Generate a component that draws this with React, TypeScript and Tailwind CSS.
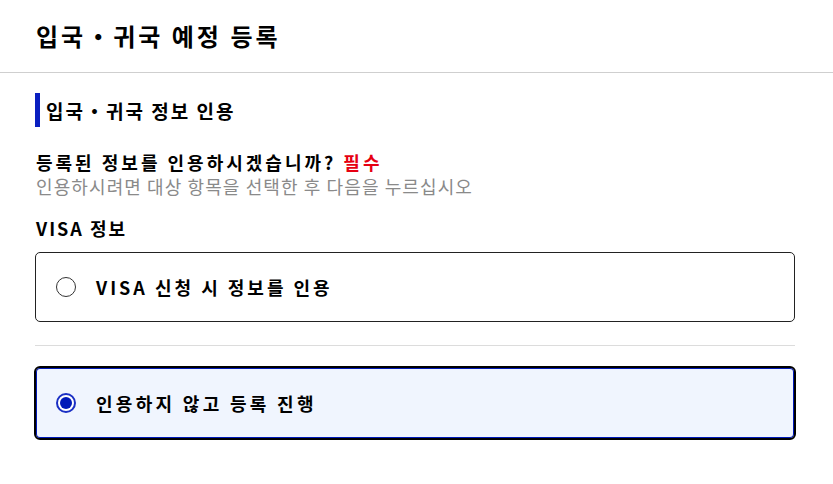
const font = { fontFamily: '"Noto Sans CJK KR", "Noto Sans", sans-serif' }

function Radio({ checked }: { checked: boolean }) {
  return checked ? (
    <span className="flex h-[20px] w-[20px] shrink-0 items-center justify-center rounded-full border-2 border-[#1a2fc4] bg-white">
      <span className="h-[12px] w-[12px] rounded-full bg-[#0019b8]" />
    </span>
  ) : (
    <span className="h-[20px] w-[20px] shrink-0 rounded-full border border-[#333] bg-white" />
  )
}

export default function App() {
  return (
    <div className="min-h-[484px] w-[833px] bg-white text-black" style={font}>
      {/* 헤더 */}
      <div className="flex h-[73px] items-center border-b border-[#cfcfcf] pl-[36px]">
        <h1 className="text-[24px] font-bold leading-none tracking-[3px]">입국・귀국 예정 등록</h1>
      </div>

      <div className="pl-[35px] pr-[38px]">
        {/* 섹션 제목 */}
        <div className="mt-[20px] flex h-[34px] items-center">
          <span className="h-full w-[5px] bg-[#0a1fc0]" />
          <h2 className="ml-[6px] text-[19px] font-bold leading-none tracking-[2px]">입국・귀국 정보 인용</h2>
        </div>

        {/* 질문 */}
        <div className="mt-[23px] pl-[1px]">
          <p className="text-[18px] font-bold leading-[24px] tracking-[3px]">
            등록된 정보를 인용하시겠습니까? <span className="text-[#e60012]">필수</span>
          </p>
          <p className="text-[18px] leading-[24px] tracking-[1.1px] text-[#8a8a8a]">
            인용하시려면 대상 항목을 선택한 후 다음을 누르십시오
          </p>
        </div>

        <p className="mt-[18px] pl-[1px] text-[18px] font-bold leading-[24px] tracking-[2px]">VISA 정보</p>

        {/* 선택지 */}
        <label className="mt-[12px] flex h-[70px] items-center rounded-[5px] border border-[#222] pl-[20px]">
          <Radio checked={false} />
          <span className="ml-[20px] text-[18px] font-bold tracking-[3px]">VISA 신청 시 정보를 인용</span>
        </label>

        <div className="mt-[23px] h-px bg-[#dcdcdc]" />

        <label className="-mx-px mt-[20px] flex h-[74px] items-center rounded-[6px] border-2 border-black bg-[#f0f5fe] pl-[20px] shadow-[inset_0_0_0_1px_#0019b8]">
          <Radio checked={true} />
          <span className="ml-[20px] text-[18px] font-bold tracking-[3.3px]">인용하지 않고 등록 진행</span>
        </label>
      </div>
    </div>
  )
}
